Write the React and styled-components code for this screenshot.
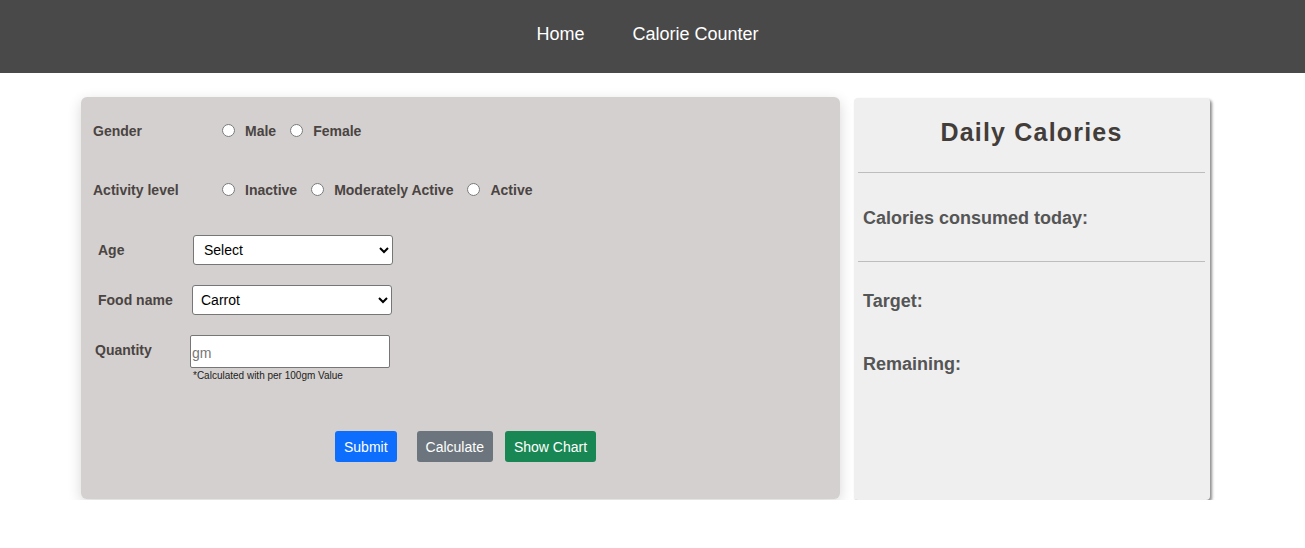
import React from "react";
import styled, { createGlobalStyle } from "styled-components";

const GlobalStyle = createGlobalStyle`
  body {
    margin: 0;
    background: #fff;
    font-family: "Liberation Sans", Arial, sans-serif;
  }
`;

const App = () => {
  return (
    <>
      <GlobalStyle />
      <NavBar>
        <NavLink>Home</NavLink>
        <NavLink>Calorie Counter</NavLink>
      </NavBar>
      <Main>
        <FormCard>
          <RadioRow top={22}>
            <RowLabel>Gender</RowLabel>
            <RadioGroup>
              <Radio type="radio" name="gender" />
              <RadioText>Male</RadioText>
              <Radio type="radio" name="gender" />
              <RadioText>Female</RadioText>
            </RadioGroup>
          </RadioRow>
          <RadioRow top={35}>
            <RowLabel>Activity level</RowLabel>
            <RadioGroup>
              <Radio type="radio" name="activity" />
              <RadioText>Inactive</RadioText>
              <Radio type="radio" name="activity" />
              <RadioText>Moderately Active</RadioText>
              <Radio type="radio" name="activity" />
              <RadioText>Active</RadioText>
            </RadioGroup>
          </RadioRow>
          <FieldRow top={33} left={17}>
            <FieldLabel width={95}>Age</FieldLabel>
            <Select defaultValue="Select">
              <option>Select</option>
            </Select>
          </FieldRow>
          <FieldRow top={20} left={17}>
            <FieldLabel width={94}>Food name</FieldLabel>
            <Select defaultValue="Carrot" small>
              <option>Carrot</option>
            </Select>
          </FieldRow>
          <FieldRow top={20} left={14} align="flex-start">
            <FieldLabel width={95} pad={7}>Quantity</FieldLabel>
            <QuantityBox>
              <QuantityInput placeholder="gm" />
              <Note>*Calculated with per 100gm Value</Note>
            </QuantityBox>
          </FieldRow>
          <Buttons>
            <Button color="#0d6efd">Submit</Button>
            <Button color="#6c757d" gap={20}>Calculate</Button>
            <Button color="#198754" gap={12}>Show Chart</Button>
          </Buttons>
        </FormCard>
        <SideCard>
          <Title>Daily Calories</Title>
          <Rule />
          <Stat top={35} bottom={33}>Calories consumed today:</Stat>
          <Rule />
          <Stat top={29}>Target:</Stat>
          <Stat top={43}>Remaining:</Stat>
        </SideCard>
      </Main>
    </>
  );
};

export default App;

const NavBar = styled.nav`
  height: 73px;
  background: #494949;
  display: flex;
  justify-content: center;
  align-items: center;
  gap: 48px;
  padding-right: 10px;
  box-sizing: border-box;
`;

const NavLink = styled.a`
  color: #fff;
  font-size: 18px;
  text-decoration: none;
  margin-top: -5px;
`;

const Main = styled.main`
  display: flex;
  align-items: flex-start;
  gap: 14px;
  padding: 24px 0 0 81px;
`;

const FormCard = styled.section`
  width: 759px;
  height: 402px;
  box-sizing: border-box;
  background: #d4d0cf;
  border-radius: 6px;
  box-shadow: 0 4px 14px rgba(0, 0, 0, 0.16);
  padding: 0 0 0 12px;
  color: #4a4442;
  font-size: 14px;
  font-weight: bold;
`;

const RadioRow = styled.div`
  display: flex;
  align-items: center;
  height: 24px;
  margin-top: ${(p) => p.top}px;
`;

const RowLabel = styled.span`
  width: 124px;
  flex-shrink: 0;
`;

const RadioGroup = styled.div`
  display: flex;
  align-items: center;
`;

const Radio = styled.input`
  width: 13px;
  height: 13px;
  margin: 0 0 2px 5px;
`;

const RadioText = styled.span`
  margin: 0 9px 0 10px;
`;

const FieldRow = styled.div`
  display: flex;
  align-items: ${(p) => p.align || "center"};
  margin-top: ${(p) => p.top}px;
  padding-left: ${(p) => p.left - 12}px;
`;

const FieldLabel = styled.span`
  width: ${(p) => p.width}px;
  flex-shrink: 0;
  padding-top: ${(p) => p.pad || 0}px;
`;

const Select = styled.select`
  width: 200px;
  height: 30px;
  border: 1px solid #767676;
  border-radius: 3px;
  background: #fff;
  font-family: "Liberation Sans", Arial, sans-serif;
  font-size: 14px;
  color: #000;
  padding: 0 ${(p) => (p.small ? 4 : 6)}px;
`;

const QuantityBox = styled.div`
  display: flex;
  flex-direction: column;
`;

const QuantityInput = styled.input`
  width: 200px;
  height: 33px;
  box-sizing: border-box;
  border: 1px solid #767676;
  border-radius: 2px;
  padding: 2px 1px 0;
  font-family: "Liberation Sans", Arial, sans-serif;
  font-size: 14px;
  &::placeholder {
    color: #777;
  }
`;

const Note = styled.small`
  font-size: 10px;
  font-weight: normal;
  color: #222;
  margin: 2px 0 0 3px;
`;

const Buttons = styled.div`
  display: flex;
  margin: 50px 0 0 242px;
`;

const Button = styled.button`
  height: 31px;
  padding: 0 9px;
  margin-left: ${(p) => p.gap || 0}px;
  border: none;
  border-radius: 3px;
  background: ${(p) => p.color};
  color: #fff;
  font-family: "Liberation Sans", Arial, sans-serif;
  font-size: 14px;
`;

const SideCard = styled.aside`
  width: 356px;
  height: 402px;
  box-sizing: border-box;
  margin-top: 1px;
  background: #efefef;
  border-radius: 4px;
  box-shadow: 2px 2px 3px rgba(0, 0, 0, 0.45);
  padding: 0 5px 0 4px;
`;

const Title = styled.h2`
  margin: 0;
  height: 74px;
  line-height: 68px;
  text-align: center;
  font-size: 25px;
  letter-spacing: 1.2px;
  color: #433d3a;
`;

const Rule = styled.hr`
  margin: 0;
  border: none;
  border-top: 1px solid #bdbdbd;
`;

const Stat = styled.p`
  margin: ${(p) => p.top}px 0 ${(p) => p.bottom || 0}px 5px;
  font-size: 18px;
  font-weight: bold;
  line-height: 20px;
  color: #555;
`;
